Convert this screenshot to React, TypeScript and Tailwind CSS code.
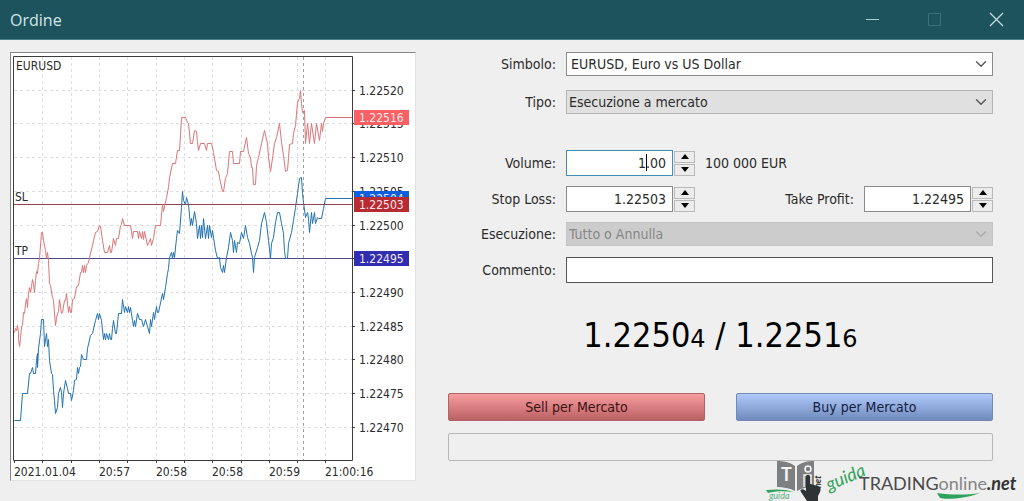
import type { ReactNode } from 'react';
import { ChevronDown } from 'lucide-react';

const ASK_LINE =
  '14,332 15,328 16,330 17,325 18,332 18,338 19,346 20,338 21,326 22,325 23,312 24,313 25,304 26,298 27,307 28,293 29,287 30,292 31,286 32,279 33,284 34,292 35,280 36,271 37,273 38,263 39,258 41,232 42,232 43,240 45,250 46,258 47,252 48,260 49,283 50,285 52,297 53,300 55,325 56,318 57,313 58,311 59,299 61,313 62,312 64,300 65,300 66,293 68,312 69,306 70,312 71,312 72,299 74,298 76,286 78,285 80,272 81,272 82,265 83,272 84,265 85,272 86,265 88,262 89,257 92,245 93,240 95,232 97,231 99,225 100,226 102,240 104,252 107,252 109,245 110,252 111,252 113,238 115,245 116,238 118,238 120,225 121,224 122,218 124,225 130,225 132,238 133,231 137,231 138,238 139,231 141,238 142,231 143,239 144,231 147,245 148,243 150,238 151,245 153,238 155,225 160,225 162,204 163,211 166,197 168,187 169,177 172,163 175,163 177,150 179,150 180,135 181,117 185,117 187,122 188,123 190,143 192,143 194,130 196,131 197,142 198,150 200,143 204,143 206,150 207,143 211,143 213,152 216,170 218,171 219,177 222,191 223,191 225,178 227,173 229,151 232,151 233,163 239,163 240,151 243,151 246,137 248,153 250,157 251,167 252,167 253,184 255,184 256,165 258,157 261,143 264,130 267,143 268,157 270,171 272,158 274,143 276,137 279,123 281,142 283,155 285,171 287,170 288,157 289,144 292,143 293,133 295,125 297,102 299,98 300,90 301,103 302,112 304,110 305,143 307,123 309,143 311,123 314,143 316,123 319,140 321,123 322,131 323,123 325,117 352,117';

const BID_LINE =
  '14,420 20,420 22,393 27,393 29,373 30,373 32,367 33,373 35,373 36,360 37,353 37,367 38,348 40,333 41,319 43,319 44,346 46,333 47,346 48,339 49,360 51,373 52,374 53,390 54,400 55,413 57,407 58,393 60,387 61,392 62,407 63,393 65,380 67,388 68,393 70,393 71,400 73,390 74,380 76,379 77,367 78,373 79,367 80,366 81,354 83,359 86,359 87,348 90,335 92,333 95,320 97,313 98,319 99,313 101,320 103,339 104,333 105,339 106,333 108,339 109,333 110,339 111,339 112,328 113,320 115,333 116,333 118,313 121,313 122,299 124,312 125,306 127,312 128,306 129,312 130,307 132,320 133,326 134,320 135,326 137,313 139,319 141,319 143,326 145,319 147,326 149,333 150,319 151,326 153,312 154,319 156,306 157,312 158,312 162,293 163,299 165,287 167,273 168,268 169,257 171,252 172,258 173,252 174,257 176,238 177,230 179,233 181,207 182,191 183,200 185,204 186,197 188,204 190,225 191,218 192,225 194,211 196,223 197,238 199,225 200,238 201,225 202,237 203,218 205,238 207,225 208,238 209,225 211,237 212,230 213,237 215,250 217,258 219,257 220,267 222,272 223,265 224,272 226,257 228,247 230,232 232,240 233,252 234,240 236,252 237,242 239,243 241,232 243,238 245,225 247,237 249,243 251,253 252,257 253,272 254,257 257,247 259,240 261,223 264,212 266,222 268,240 270,258 271,243 273,237 275,222 277,212 279,212 281,223 283,233 284,250 285,258 287,258 288,243 291,232 293,220 295,207 297,193 299,178 301,177 302,193 303,202 305,217 307,212 308,218 309,232 311,212 312,223 314,212 315,223 317,217 318,218 321,218 323,208 325,198 352,198';

const priceTicks = [
  { y: 90, label: '1.22520' },
  { y: 123, label: '1.22515' },
  { y: 157, label: '1.22510' },
  { y: 191, label: '1.22505' },
  { y: 225, label: '1.22500' },
  { y: 258, label: '1.22495' },
  { y: 292, label: '1.22490' },
  { y: 326, label: '1.22485' },
  { y: 359, label: '1.22480' },
  { y: 393, label: '1.22475' },
  { y: 427, label: '1.22470' },
];

const timeTicks = [14, 42, 71, 99, 127, 156, 184, 212, 241, 269, 297, 325];

const timeLabels = [
  { x: 14, label: '2021.01.04' },
  { x: 99, label: '20:57' },
  { x: 156, label: '20:58' },
  { x: 212, label: '20:58' },
  { x: 269, label: '20:59' },
  { x: 325, label: '21:00:16' },
];

// Later tags are painted over earlier ones
const priceTags = [
  { y: 117, label: '1.22516', color: '#f96064' },
  { y: 198, label: '1.22504', color: '#0b5fe0' },
  { y: 204, label: '1.22503', color: '#b92b33' },
  { y: 258, label: '1.22495', color: '#2f2db0' },
];

function TickChart() {
  return (
    <svg
      viewBox="11 53 404 427"
      className="block w-[404px] h-[427px] font-['DejaVu_Sans_Condensed','Noto_Sans',sans-serif] text-[12px]"
      role="img"
      aria-label="EURUSD"
    >
      {/* Grid */}
      <g stroke="#dedede" strokeDasharray="3 3" shapeRendering="crispEdges">
        {priceTicks.map((tick) => (
          <line key={tick.y} x1="14" x2="352" y1={tick.y + 0.5} y2={tick.y + 0.5} />
        ))}
        {timeTicks.slice(1).map((x) => (
          <line key={x} x1={x + 0.5} x2={x + 0.5} y1="57" y2="460" />
        ))}
      </g>
      <line x1="303.5" x2="303.5" y1="57" y2="460" stroke="#a0a0a0" strokeDasharray="3 3" />

      {/* Levels */}
      <path d="M14 204.5H352" stroke="#97434c" />
      <path d="M14 258.5H352" stroke="#4c4c86" />

      <g transform="translate(0.5 0.5)" fill="none">
        <polyline points={ASK_LINE} stroke="#d97579" />
        <polyline points={BID_LINE} stroke="#2272ae" />
      </g>

      {/* Frame and axes */}
      <path d="M13.5 56.5H352.5V460.5H13.5Z" fill="none" stroke="#3c3c3c" />
      <g stroke="#3c3c3c">
        {priceTicks.map((tick) => (
          <line key={tick.y} x1="353" x2="355" y1={tick.y + 0.5} y2={tick.y + 0.5} />
        ))}
        {timeTicks.map((x) => (
          <line key={x} x1={x + 0.5} x2={x + 0.5} y1="461" y2="463" />
        ))}
      </g>

      <g fill="#2b2b2b">
        <text x="16" y="70">EURUSD</text>
        <text x="15" y="201">SL</text>
        <text x="15" y="255">TP</text>
        {priceTicks.map((tick) => (
          <text key={tick.y} x="359" y={tick.y + 5}>{tick.label}</text>
        ))}
        {timeLabels.map((time) => (
          <text key={time.x} x={time.x} y="476">{time.label}</text>
        ))}
      </g>

      {priceTags.map((tag) => (
        <g key={tag.y}>
          <rect x="354" y={tag.y - 7} width="55" height="15" fill={tag.color} />
          <text x="359" y={tag.y + 5} fill="#f6e9ee">{tag.label}</text>
        </g>
      ))}
    </svg>
  );
}

function FieldLabel({ htmlFor, children }: { htmlFor: string; children: ReactNode }) {
  return (
    <label htmlFor={htmlFor} className="w-[108px] shrink-0 text-right whitespace-nowrap">
      {children}
    </label>
  );
}

function SelectField({ id, value, look, disabled }: { id: string; value: string; look: string; disabled?: boolean }) {
  return (
    <div className="relative flex-1">
      <select
        id={id}
        disabled={disabled}
        className={`block w-full h-6 appearance-none border pr-6 leading-none opacity-100 outline-none ${look}`}
      >
        <option>{value}</option>
      </select>
      <ChevronDown
        className={`pointer-events-none absolute right-[3px] top-[3px] size-[18px] ${disabled ? 'text-[#aaaaaa]' : 'text-[#555555]'}`}
        strokeWidth={1.8}
      />
    </div>
  );
}

function Spinner({ name }: { name: string }) {
  return (
    <div className="flex flex-col gap-px w-[21px] shrink-0">
      <button type="button" aria-label={`${name} +`} className="flex h-3 items-center justify-center border border-[#b9b9b9] bg-[#ececec]">
        <svg viewBox="0 0 8 5" className="w-2 h-[5px]"><path d="M4 0L8 5H0Z" fill="#000" /></svg>
      </button>
      <button type="button" aria-label={`${name} -`} className="flex h-3 items-center justify-center border border-[#b9b9b9] bg-[#ececec]">
        <svg viewBox="0 0 8 5" className="w-2 h-[5px]"><path d="M4 5L8 0H0Z" fill="#000" /></svg>
      </button>
    </div>
  );
}

function NumberField({ id, name, value, active }: { id: string; name: string; value: string; active?: boolean }) {
  return (
    <div className="flex items-center gap-px">
      <div className="relative">
        <input
          id={id}
          inputMode="decimal"
          defaultValue={value}
          className={`block w-[107px] h-[26px] border bg-white pr-[6px] text-right outline-none ${active ? 'border-[#3f8fb5]' : 'border-[#8a8a8a]'}`}
        />
        {active && <span className="absolute right-[26px] top-1 h-[17px] w-px bg-black" />}
      </div>
      <Spinner name={name} />
    </div>
  );
}

function Watermark() {
  return (
    <svg
      viewBox="764 456 260 45"
      className="pointer-events-none absolute right-0 bottom-0 w-[260px] h-[45px]"
      role="img"
      aria-label="guida TRADINGonline.net"
    >
      {/* Open book */}
      <path d="M777 461C783 461 790 462 795 466V491C789 488 783 487 777 487Z" fill="#7d7f81" />
      <path d="M797 466C802 462 808 461 814 461V487C808 487 802 488 797 491Z" fill="#7d7f81" />
      <text x="781" y="481" fontSize="18" fill="#f4f4f4" className="font-['Lato',sans-serif] font-bold">T</text>
      <circle cx="808" cy="469" r="3" fill="none" stroke="#f4f4f4" strokeWidth="1.6" />
      <path d="M804 487V475H811V484" fill="none" stroke="#f4f4f4" strokeWidth="1.4" />
      {/* Pointing hand */}
      <path
        d="M806 477C806 474 810 474 810 477V484L818 486C821 487 821 489 820 492L818 496V501H807L801 492C799 489 803 488 806 491Z"
        fill="#2f3336"
      />
      <text transform="translate(821 488) rotate(-90)" fontSize="9" fill="#333" className="font-['Lato',sans-serif] font-bold italic">net</text>
      <path d="M766 490C776 489 786 489 794 492C784 491 775 491 768 493Z" fill="#2fa35b" />
      <text x="769" y="499" fontSize="9" fill="#5cb07c" className="font-['Lato',sans-serif] italic">guida</text>

      {/* Wordmark */}
      <text transform="translate(829 491) rotate(-23)" fontSize="18" fill="#2fa35b" className="font-['Lato',sans-serif] italic">guida</text>
      <text x="859" y="490" fontSize="18" fill="#4a4a4a" className="font-['Lato',sans-serif]">
        TRADING<tspan fill="#858585">online</tspan>
        <tspan fill="#333" className="font-bold italic">.net</tspan>
      </text>
      <path d="M937 493C952 495 966 495 980 493C968 498 947 500 940 498Z" fill="#2fa35b" />
    </svg>
  );
}

export default function App() {
  return (
    <main className="relative min-h-screen bg-[#efefef] font-['DejaVu_Sans_Condensed','Noto_Sans',sans-serif] text-[14px] leading-5 text-[#2b2b2b]">
      <header className="flex h-10 items-center justify-between border-b border-[#4c8089] bg-[#1c535d] pl-[10px] pr-5 text-[#d5e6e9]">
        <h1 className="font-['Open_Sans','Noto_Sans',sans-serif] text-[16px]">Ordine</h1>
        <div className="flex items-center gap-[47px]">
          <button type="button" aria-label="Minimize">
            <svg viewBox="0 0 15 15" className="size-[15px]"><path d="M1 7.5H14" stroke="#a9cfd4" /></svg>
          </button>
          <button type="button" aria-label="Maximize" disabled>
            <svg viewBox="0 0 15 15" className="size-[15px]"><path d="M1.5 1.5H13.5V13.5H1.5Z" fill="none" stroke="#3b7079" /></svg>
          </button>
          <button type="button" aria-label="Close">
            <svg viewBox="0 0 15 15" className="size-[15px]"><path d="M1 1L14 14M14 1L1 14" stroke="#c4dde1" strokeWidth="1.3" /></svg>
          </button>
        </div>
      </header>

      <div className="flex items-start gap-8 pt-3 pl-[10px] pr-[31px]">
        <div className="shrink-0 border border-t-[#858585] border-l-[#858585] border-r-[#e2e2e2] border-b-[#e2e2e2] bg-white">
          <TickChart />
        </div>

        <form className="flex flex-1 flex-col" onSubmit={(event) => event.preventDefault()}>
          <div className="flex items-center gap-[10px]">
            <FieldLabel htmlFor="symbol">Simbolo:</FieldLabel>
            <SelectField id="symbol" value="EURUSD, Euro vs US Dollar" look="border-[#8a8a8a] bg-white pl-1" />
          </div>
          <div className="mt-[14px] flex items-center gap-[10px]">
            <FieldLabel htmlFor="type">Tipo:</FieldLabel>
            <SelectField id="type" value="Esecuzione a mercato" look="border-[#b4b4b4] bg-[#e0e0e0] pl-[2px]" />
          </div>

          <div className="mt-9 flex items-center gap-[10px]">
            <FieldLabel htmlFor="volume">Volume:</FieldLabel>
            <NumberField id="volume" name="Volume" value="1.00" active />
            <span>100 000 EUR</span>
          </div>
          <div className="mt-[10px] flex items-center justify-between">
            <div className="flex items-center gap-[10px]">
              <FieldLabel htmlFor="stop-loss">Stop Loss:</FieldLabel>
              <NumberField id="stop-loss" name="Stop Loss" value="1.22503" />
            </div>
            <div className="flex items-center gap-[10px]">
              <label htmlFor="take-profit">Take Profit:</label>
              <NumberField id="take-profit" name="Take Profit" value="1.22495" />
            </div>
          </div>

          <div className="mt-[10px] flex items-center gap-[10px]">
            <FieldLabel htmlFor="execution">Esecuzione:</FieldLabel>
            <SelectField id="execution" value="Tutto o Annulla" look="border-[#c4c4c4] bg-[#cccccc] pl-[2px] text-[#868686]" disabled />
          </div>
          <div className="mt-[11px] flex items-center gap-[10px]">
            <FieldLabel htmlFor="comment">Commento:</FieldLabel>
            <input id="comment" className="h-[26px] min-w-0 flex-1 border border-[#555555] bg-white px-1 outline-none" />
          </div>

          <p className="mt-8 text-center text-[34px] leading-10 text-black">
            1.2250<span className="font-['DejaVu_Sans',sans-serif] text-[24px]">4</span> / 1.2251<span className="font-['DejaVu_Sans',sans-serif] text-[24px]">6</span>
          </p>

          <div className="mt-[34px] grid grid-cols-2 gap-[31px]">
            <button type="button" className="h-7 rounded-xs border border-[#b06467] bg-linear-to-b from-[#f79da0] to-[#bb6063] text-[#3b1215]">
              Sell per Mercato
            </button>
            <button type="button" className="h-7 rounded-xs border border-[#7389b8] bg-linear-to-b from-[#b1c9fb] to-[#708bbd] text-[#14203f]">
              Buy per Mercato
            </button>
          </div>
          <div className="mt-3 h-7 rounded-xs border border-[#b8b8b8]" />
        </form>
      </div>

      <Watermark />
    </main>
  );
}
